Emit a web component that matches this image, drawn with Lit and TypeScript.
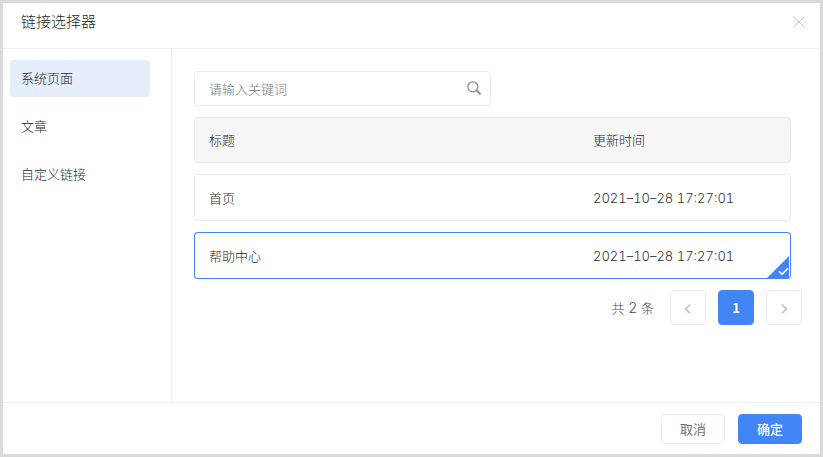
import { LitElement, html, css, svg } from "lit";
import { customElement, state } from "lit/decorators.js";
import { classMap } from "lit/directives/class-map.js";

interface PageLink {
  title: string;
  updated: string;
}

const TABS = ["系统页面", "文章", "自定义链接"];

const PAGES: PageLink[] = [
  { title: "首页", updated: "2021–10–28 17:27:01" },
  { title: "帮助中心", updated: "2021–10–28 17:27:01" },
];

const chevron = (d: string) => html`
  <svg class="chevron" viewBox="0 0 12 12" aria-hidden="true">${svg`<path d=${d} />`}</svg>
`;

@customElement("app-root")
export class AppRoot extends LitElement {
  @state() private tab = 0;
  @state() private selected = 1;

  static styles = css`
    * {
      box-sizing: border-box;
    }
    :host {
      display: flex;
      flex-direction: column;
      box-sizing: border-box;
      min-height: 100vh;
      border: 3px solid #dadada;
      background: #fff;
      color: #262626;
      font: 300 13px/20px Inter, "Noto Sans CJK SC", sans-serif;
    }
    button,
    input {
      margin: 0;
      font: inherit;
      color: inherit;
    }
    button {
      padding: 0;
      border: 0;
      background: none;
      cursor: pointer;
    }
    svg {
      display: block;
      fill: none;
    }
    .header {
      display: flex;
      align-items: center;
      justify-content: space-between;
      height: 46px;
      padding: 0 13px 8px 18px;
      border-bottom: 1px solid #efefef;
    }
    .title {
      margin: 0;
      font-size: 15px;
      font-weight: 300;
    }
    .close svg {
      width: 16px;
      height: 16px;
      stroke: #c4c4c4;
    }
    .body {
      display: flex;
      flex: 1;
    }
    .nav {
      display: flex;
      flex-direction: column;
      flex: none;
      gap: 11px;
      width: 169px;
      padding: 11px 21px 11px 7px;
      border-right: 1px solid #efefef;
    }
    .tab {
      height: 37px;
      padding: 0 11px 1px;
      border-radius: 4px;
      text-align: left;
    }
    .tab.active {
      background: #e6edfc;
    }
    .main {
      flex: 1;
      min-width: 0;
      padding: 22px 18px 22px 22px;
    }
    .search {
      display: flex;
      align-items: center;
      width: 297px;
      max-width: 100%;
      height: 35px;
      padding: 0 8px 0 14px;
      border: 1px solid #ebebeb;
      border-radius: 4px;
    }
    .search input {
      flex: 1;
      min-width: 0;
      padding: 0;
      border: 0;
      outline: 0;
      background: none;
    }
    .search input::placeholder {
      color: #777;
      opacity: 1;
    }
    .search svg {
      width: 16px;
      height: 16px;
      margin-bottom: 2px;
      stroke: #8c8c8c;
      stroke-width: 1.3;
    }
    .results {
      padding-right: 11px;
    }
    table {
      width: 100%;
      table-layout: fixed;
      border-collapse: separate;
      border-spacing: 0 11px;
    }
    th,
    td {
      height: 47px;
      padding: 0 14px;
      border: 1px solid #ebebeb;
      font-weight: 300;
      text-align: left;
    }
    th {
      height: 46px;
      background: #f6f6f6;
    }
    th:first-child,
    td:first-child {
      border-right: 0;
      border-radius: 4px 0 0 4px;
    }
    th:last-child,
    td:last-child {
      position: relative;
      width: 212px;
      border-left: 0;
      border-radius: 0 4px 4px 0;
    }
    tbody tr {
      cursor: pointer;
    }
    .selected td {
      border-color: #4285f4;
    }
    .time {
      color: #333;
      font-variant-numeric: tabular-nums;
    }
    .count {
      font-size: 14px;
    }
    .mark {
      position: absolute;
      right: 1px;
      bottom: 0;
      width: 22px;
      height: 22px;
    }
    .mark .corner {
      fill: #4285f4;
    }
    .mark .tick {
      stroke: #fff;
      stroke-width: 1.5;
    }
    .pager {
      display: flex;
      align-items: center;
      justify-content: flex-end;
      gap: 12px;
    }
    .total {
      margin-right: 4px;
      color: #4a4a4a;
      white-space: pre;
    }
    .page {
      display: flex;
      align-items: center;
      justify-content: center;
      width: 36px;
      height: 35px;
      border: 1px solid #ebebeb;
      border-radius: 4px;
    }
    .page.current {
      border-color: #4285f4;
      background: #4285f4;
      color: #fff;
      font-family: "Noto Sans CJK SC", sans-serif;
      font-weight: 700;
    }
    .chevron {
      width: 12px;
      height: 12px;
      margin-top: 3px;
      stroke: #c8c8c8;
      stroke-width: 2;
    }
    .footer {
      display: flex;
      justify-content: flex-end;
      gap: 13px;
      height: 52px;
      padding: 11px 18px 0;
      border-top: 1px solid #efefef;
    }
    .action {
      width: 64px;
      height: 30px;
      border: 1px solid #ebebeb;
      border-radius: 4px;
      color: #707070;
      font-weight: 400;
    }
    .action.primary {
      border-color: #4285f4;
      background: #4285f4;
      color: #fff;
      font-weight: 500;
    }
  `;

  render() {
    return html`
      <header class="header">
        <h1 class="title">链接选择器</h1>
        <button class="close" aria-label="关闭">
          <svg viewBox="0 0 16 16" aria-hidden="true"><path d="M2.5 2.5 13.5 13.5M13.5 2.5 2.5 13.5" /></svg>
        </button>
      </header>
      <div class="body">
        <nav class="nav">
          ${TABS.map(
            (name, i) => html`<button
              class=${classMap({ tab: true, active: i === this.tab })}
              @click=${() => (this.tab = i)}
            >${name}</button>`
          )}
        </nav>
        <main class="main">
          <label class="search">
            <input type="text" placeholder="请输入关键词" aria-label="请输入关键词" />
            <svg viewBox="0 0 16 16" aria-hidden="true">
              <circle cx="6.8" cy="6.8" r="5" />
              <path d="M10.4 10.4 14.6 14.4" stroke-width="1.8" />
            </svg>
          </label>
          <div class="results">
            <table>
              <thead>
                <tr><th scope="col">标题</th><th scope="col">更新时间</th></tr>
              </thead>
              <tbody>
                ${PAGES.map(
                  (page, i) => html`<tr
                    class=${classMap({ selected: i === this.selected })}
                    @click=${() => (this.selected = i)}
                  >
                    <td>${page.title}</td>
                    <td class="time">
                      ${page.updated}
                      ${i === this.selected
                        ? html`<svg class="mark" viewBox="0 0 22 22" aria-hidden="true">
                            <path class="corner" d="M22 0V22H0Z" />
                            <path class="tick" d="M12 15.2 15 18.2 21 12.4" />
                          </svg>`
                        : null}
                    </td>
                  </tr>`
                )}
              </tbody>
            </table>
          </div>
          <div class="pager">
            <span class="total">共<span class="count"> ${PAGES.length} </span>条</span>
            <button class="page" aria-label="上一页">${chevron("M8 1.6 3.6 6 8 10.4")}</button>
            <button class="page current" aria-current="page">1</button>
            <button class="page" aria-label="下一页">${chevron("M4 1.6 8.4 6 4 10.4")}</button>
          </div>
        </main>
      </div>
      <footer class="footer">
        <button class="action">取消</button>
        <button class="action primary">确定</button>
      </footer>
    `;
  }
}
